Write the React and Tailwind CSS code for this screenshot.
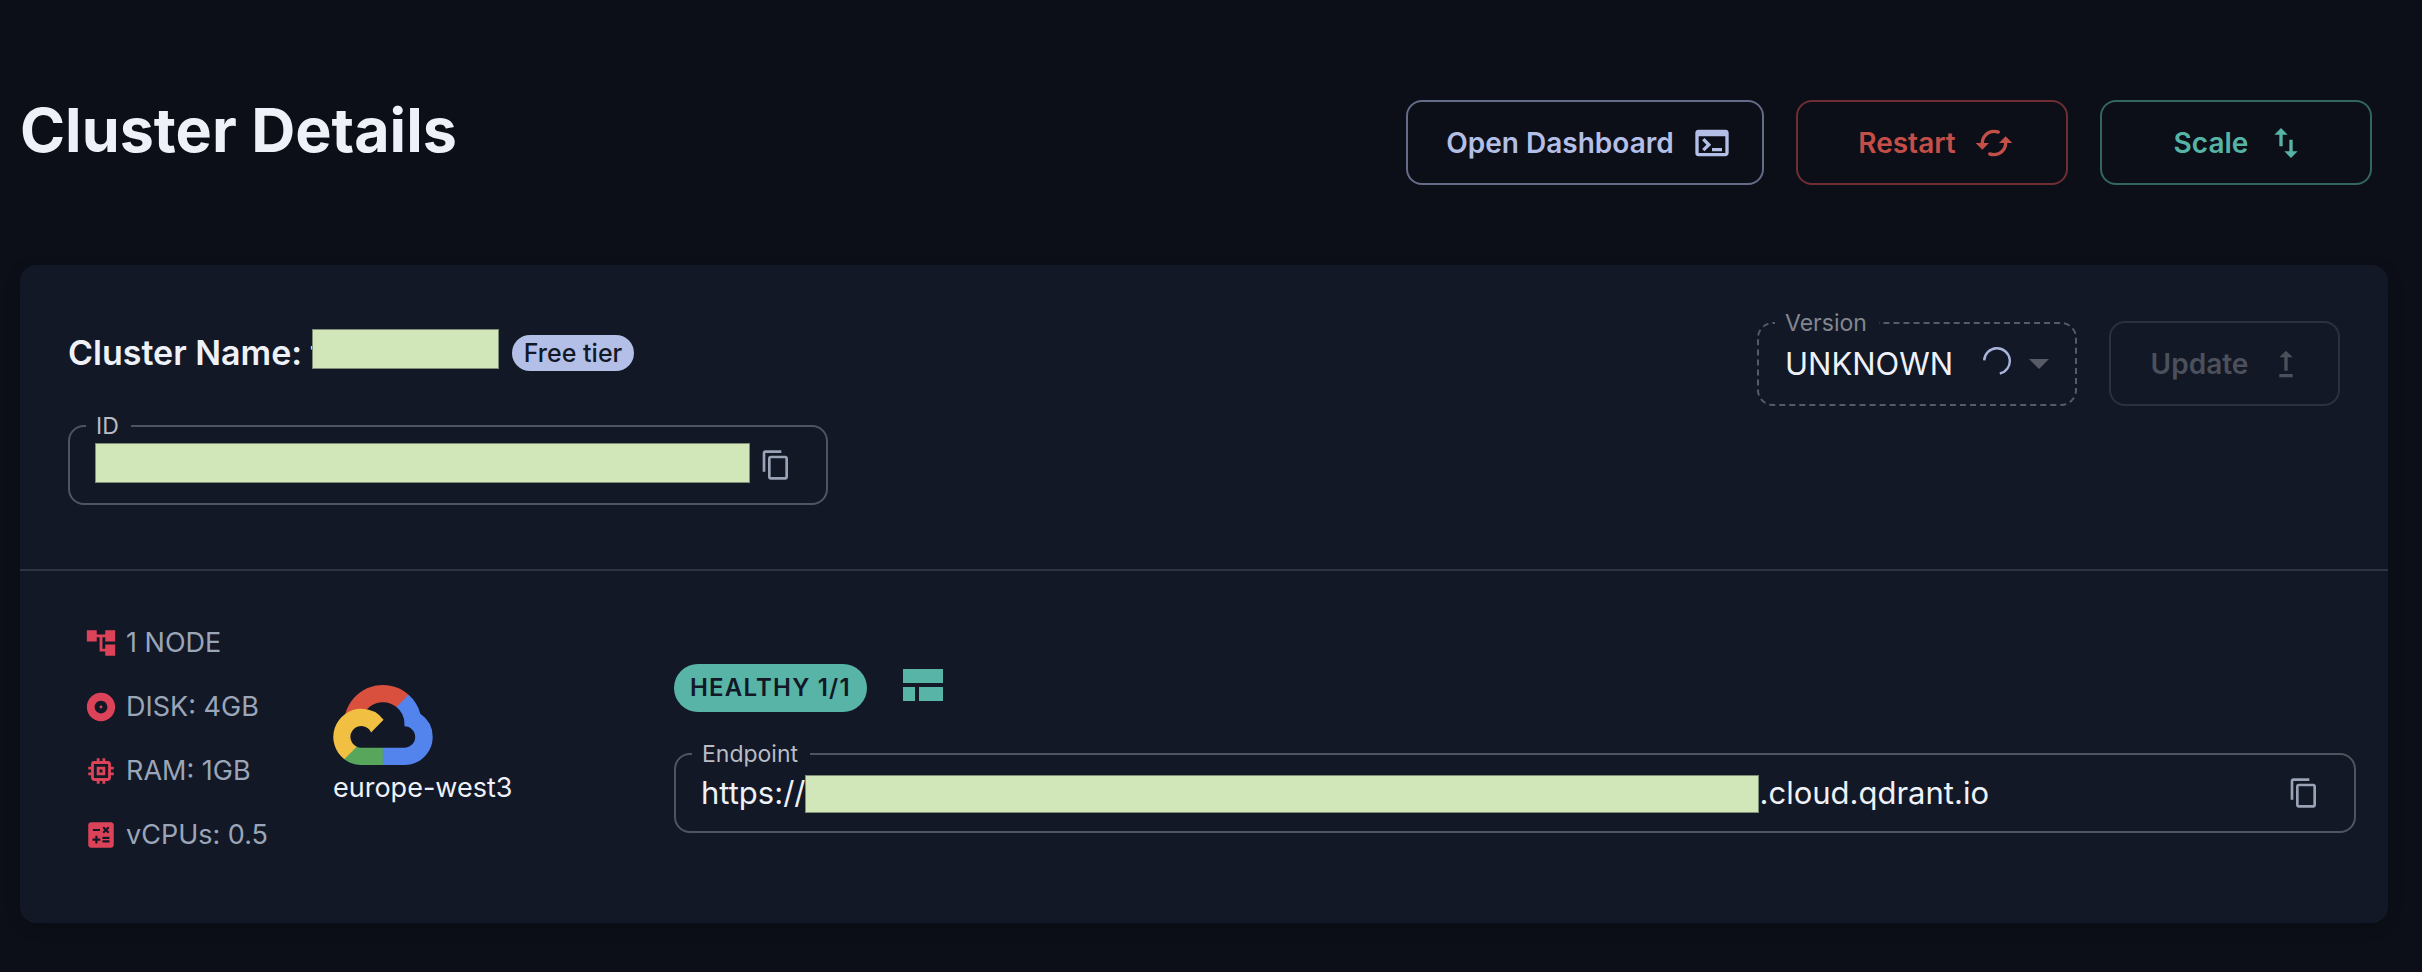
import React from "react";
import {
  MdAccountTree,
  MdAlbum,
  MdArrowDropDown,
  MdCalculate,
  MdContentCopy,
  MdMemory,
  MdSwapVert,
  MdTerminal,
  MdUpgrade,
} from "react-icons/md";

function CachedIcon({ className }) {
  return (
    <svg viewBox="0 0 24 24" fill="currentColor" className={className} aria-hidden="true">
      <path d="M19 8l-4 4h3c0 3.31-2.69 6-6 6-.79 0-1.56-.15-2.25-.44-.36-.15-.77-.04-1.04.23-.51.51-.33 1.37.34 1.64.91.37 1.91.57 2.95.57 4.42 0 8-3.58 8-8h3l-4-4zM6 12c0-3.31 2.69-6 6-6 .79 0 1.56.15 2.25.44.36.15.77.04 1.04-.23.51-.51.33-1.37-.34-1.64C14.04 4.2 13.04 4 12 4c-4.42 0-8 3.58-8 8H1l4 4 4-4H6z" />
    </svg>
  );
}

function LayoutIcon({ className }) {
  return (
    <svg viewBox="0 0 20 16" fill="currentColor" className={className} aria-hidden="true">
      <path d="M0 0h20v7H0zM0 9h6v7H0zM8 9h12v7H8z" />
    </svg>
  );
}

function Spinner({ className }) {
  return (
    <svg viewBox="0 0 28 28" fill="none" className={className} aria-hidden="true">
      <path
        d="M1.2 13.4A12.8 12.8 0 1 1 16.8 26.5"
        stroke="currentColor"
        strokeWidth="2.4"
      />
    </svg>
  );
}

function GoogleCloudLogo({ className }) {
  return (
    <svg viewBox="0 0 256 206" className={className} role="img" aria-label="Google Cloud">
      <path
        fill="#d9503f"
        d="M170.25 56.82l22.25-22.25 1.49-9.37C153.44-11.68 88.98-7.5 52.42 33.92 42.27 45.42 34.73 59.76 30.72 74.57l7.97-1.12 44.5-7.34 3.44-3.51c19.8-21.75 53.27-24.67 76.13-6.17l7.49.39z"
      />
      <path
        fill="#5383ec"
        d="M224.2 73.92a100.25 100.25 0 0 0-30.21-48.72l-31.23 31.23a55.5 55.5 0 0 1 20.38 44.04v5.54c15.35 0 27.8 12.45 27.8 27.8 0 15.35-12.45 27.48-27.8 27.48h-55.68l-5.46 5.93v33.34l5.46 5.23h55.68c39.93.31 72.55-31.49 72.86-71.42a72.3 72.3 0 0 0-31.8-60.45z"
      />
      <path
        fill="#58a55c"
        d="M71.87 205.8h55.59v-44.51H71.87a27.3 27.3 0 0 1-11.4-2.5l-7.89 2.42-22.4 22.25-1.96 7.58c12.57 9.49 27.9 14.82 43.65 14.76z"
      />
      <path
        fill="#f1bf42"
        d="M71.87 61.43A72.3 72.3 0 0 0 28.22 191.04l32.25-32.25a27.8 27.8 0 1 1 36.78-36.77l32.24-32.25a72.2 72.2 0 0 0-57.62-28.34z"
      />
    </svg>
  );
}

const ACTION =
  "flex h-[85px] items-center justify-center rounded-2xl border-2 pl-2 text-[28px] font-semibold";

const SPECS = [
  { icon: MdAccountTree, text: "1 NODE" },
  { icon: MdAlbum, text: "DISK: 4GB" },
  { icon: MdMemory, text: "RAM: 1GB" },
  { icon: MdCalculate, text: "vCPUs: 0.5" },
];

function CopyButton({ label }) {
  return (
    <button type="button" aria-label={label} className="text-[#9aa3b5]">
      <MdContentCopy className="size-8" />
    </button>
  );
}

function FieldLegend({ htmlFor, children, muted }) {
  return (
    <legend className="pr-3 pl-[10px] text-[23px]/6">
      <label htmlFor={htmlFor} className={muted ? "text-[#82868f]" : "text-[#b9bcc5]"}>
        {children}
      </label>
    </legend>
  );
}

export default function App() {
  return (
    <main className="min-h-screen bg-[#0c0f17] px-5 pt-[100px] pb-12 font-['Inter',sans-serif] text-[#eef1f8]">
      <header className="mb-20 flex items-start justify-between pr-[30px]">
        <h1 className="text-[61px]/[60px] font-bold">Cluster Details</h1>
        <div className="flex gap-8">
          <button type="button" className={`${ACTION} w-[358px] gap-[18px] border-[#656c87] text-[#b3bfe6]`}>
            Open Dashboard
            <MdTerminal className="size-10" />
          </button>
          <button type="button" className={`${ACTION} w-[272px] gap-[18px] border-[#6e2e33] text-[#c44e48]`}>
            Restart
            <CachedIcon className="size-10" />
          </button>
          <button type="button" className={`${ACTION} w-[272px] gap-[18px] border-[#32665f] text-[#55b4a6]`}>
            Scale
            <MdSwapVert className="size-10" />
          </button>
        </div>
      </header>

      <section className="mr-[14px] rounded-2xl bg-[#121826] shadow-[0_4px_16px_rgba(0,0,0,0.15)]">
        <div className="flex items-start justify-between border-b-2 border-[#2e3443] px-12 pt-[46px] pb-16">
          <div className="pt-[18px]">
            <div className="flex items-center">
              <h2 className="text-[34px]/[48px] font-semibold">Cluster Name: t</h2>
              <span className="relative -ml-[11px] mb-2 h-10 w-[187px] border border-[#7f8d78] bg-[#d1e7b9]" />
              <span className="ml-[13px] rounded-full bg-[#b3bfe6] px-3 text-[25px]/[36px] font-medium text-[#121826]">
                Free tier
              </span>
            </div>
            <fieldset className="mt-[37px] w-[760px] rounded-2xl border-2 border-[#50545f] px-4 pt-[5px] pb-4">
              <FieldLegend htmlFor="cluster-id">ID</FieldLegend>
              <div className="flex h-11 items-start gap-[10px] pl-[9px]">
                <input
                  id="cluster-id"
                  readOnly
                  value=""
                  className="h-10 w-[655px] border border-[#7f8d78] bg-[#d1e7b9]"
                />
                <span className="flex h-11 items-center">
                  <CopyButton label="Copy cluster ID" />
                </span>
              </div>
            </fieldset>
          </div>

          <div className="flex items-end gap-8">
            <fieldset className="w-80 rounded-2xl border-2 border-dashed border-[#565b66] px-4 pt-1.5 pb-[19px]">
              <FieldLegend htmlFor="version" muted>
                Version
              </FieldLegend>
              <div className="relative">
                <select
                  id="version"
                  defaultValue="UNKNOWN"
                  className="h-11 w-full appearance-none bg-transparent pl-[10px] text-[31px]"
                >
                  <option>UNKNOWN</option>
                </select>
                <span className="pointer-events-none absolute inset-y-0 -right-1 flex items-center gap-1">
                  <Spinner className="mb-1 size-7 text-[#a9b4dc]" />
                  <MdArrowDropDown className="size-12 text-[#565b66]" />
                </span>
              </div>
            </fieldset>
            <button
              type="button"
              disabled
              className={`${ACTION} w-[231px] gap-[18px] border-[#2c313e] text-[#4c505b]`}
            >
              Update
              <MdUpgrade className="size-10" />
            </button>
          </div>
        </div>

        <div className="flex items-center py-[55px] pr-8 pl-16">
          <ul className="flex w-[249px] flex-col gap-[30px] pb-4 text-[27px]/[34px] text-[#9aa6b8]">
            {SPECS.map(({ icon: Icon, text }) => (
              <li key={text} className="flex items-center gap-2">
                <Icon className="size-[34px] text-[#dc4359]" />
                {text}
              </li>
            ))}
          </ul>

          <div className="w-[341px] pb-1.5">
            <GoogleCloudLogo className="h-20 w-[100px]" />
            <p className="mt-[7px] text-[27px]/8">europe-west3</p>
          </div>

          <div className="flex-1 pt-0.5">
            <div className="flex items-center gap-9">
              <span className="rounded-full bg-[#57b4a7] px-4 text-[24px]/[48px] font-semibold tracking-wider text-[#121826]">
                HEALTHY 1/1
              </span>
              <LayoutIcon className="mb-1.5 h-8 w-10 text-[#57b4a7]" />
            </div>
            <fieldset className="mt-[30px] rounded-2xl border-2 border-[#50545f] px-4 pt-[5px] pb-4">
              <FieldLegend htmlFor="endpoint">Endpoint</FieldLegend>
              <div className="flex h-11 items-center pt-0.5 pl-[9px] text-[31px]">
                <input
                  id="endpoint"
                  readOnly
                  value="https://"
                  className="field-sizing-content bg-transparent"
                />
                <span className="h-[38px] w-[954px] border border-[#7f8d78] bg-[#d1e7b9]" />
                <input
                  aria-label="Endpoint domain"
                  readOnly
                  value=".cloud.qdrant.io"
                  className="field-sizing-content bg-transparent"
                />
                <span className="mr-[18px] mb-0.5 ml-auto flex">
                  <CopyButton label="Copy endpoint" />
                </span>
              </div>
            </fieldset>
          </div>
        </div>
      </section>
    </main>
  );
}
